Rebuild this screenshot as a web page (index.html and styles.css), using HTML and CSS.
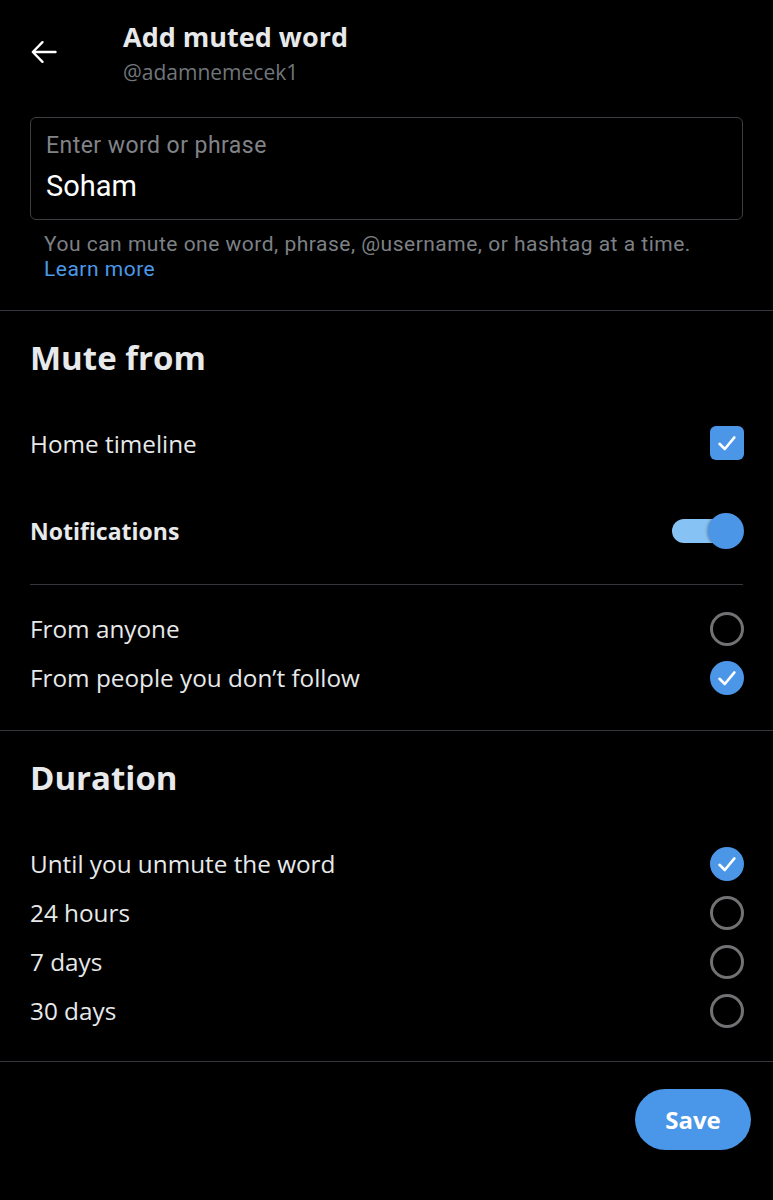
FILE: index.html
```html
<!DOCTYPE html>
<html>
	<head>
		<meta charset="utf-8">
		<link rel="stylesheet" href="styles.css">
	</head>
	<body>
		<div class="header">
			<div class="back">
				<svg width="26" height="26" viewBox="0 0 26 26">
					<path d="M24.5 13H2 M11.5 3.2L1.8 13l9.7 9.8" fill="none" stroke="#fff" stroke-width="2.4" stroke-linecap="round" stroke-linejoin="round"/>
				</svg>
			</div>
			<div class="title-block">
				<h1>Add muted word</h1>
				<div class="handle">@adamnemecek1</div>
			</div>
		</div>

		<div class="intro">
			<div class="field">
				<div class="field-label">Enter word or phrase</div>
				<div class="field-value">Soham</div>
			</div>
			<div class="hint">
				You can mute one word, phrase, @username, or hashtag at a time.<br>
				<a href="#" class="link">Learn more</a>
			</div>
		</div>

		<div class="section">
			<h2>Mute from</h2>
			<div class="switch-rows">
				<div class="row tall">
					<span>Home timeline</span>
					<span class="checkbox">
						<svg width="34" height="34" viewBox="0 0 34 34"><path d="M9.5 17.8l5.3 5.2 9.6-11.6" fill="none" stroke="#fff" stroke-width="2.6" stroke-linecap="round" stroke-linejoin="round"/></svg>
					</span>
				</div>
				<div class="row tall">
					<span class="bold">Notifications</span>
					<span class="toggle"><span class="knob"></span></span>
				</div>
			</div>
			<div class="sub-divider"></div>
			<div class="row">
				<span>From anyone</span>
				<span class="radio"></span>
			</div>
			<div class="row">
				<span>From people you don’t follow</span>
				<span class="radio checked">
					<svg width="34" height="34" viewBox="0 0 34 34"><path d="M9.5 17.8l5.3 5.2 9.6-11.6" fill="none" stroke="#fff" stroke-width="2.6" stroke-linecap="round" stroke-linejoin="round"/></svg>
				</span>
			</div>
		</div>

		<div class="section duration">
			<h2>Duration</h2>
			<div class="row">
				<span>Until you unmute the word</span>
				<span class="radio checked">
					<svg width="34" height="34" viewBox="0 0 34 34"><path d="M9.5 17.8l5.3 5.2 9.6-11.6" fill="none" stroke="#fff" stroke-width="2.6" stroke-linecap="round" stroke-linejoin="round"/></svg>
				</span>
			</div>
			<div class="row">
				<span>24 hours</span>
				<span class="radio"></span>
			</div>
			<div class="row">
				<span>7 days</span>
				<span class="radio"></span>
			</div>
			<div class="row">
				<span>30 days</span>
				<span class="radio"></span>
			</div>
		</div>

		<div class="footer">
			<button class="btn">Save</button>
		</div>
	</body>
</html>
```

FILE: styles.css
```css
body {
	margin: 0;
	background: #000;
	color: #e7e9ea;
	font-family: "Open Sans", "Liberation Sans", sans-serif;
	font-size: 24.3px;
}
.header {
	display: flex;
	align-items: flex-start;
	padding: 20px 0 0 31px;
}
.back {
	width: 92px;
	padding-top: 19px;
}
.back svg {
	display: block;
}
h1 {
	margin: 0;
	font-size: 27px;
	line-height: 34px;
	font-weight: 700;
}
.handle {
	margin-top: 4px;
	font-size: 21px;
	line-height: 28px;
	color: #71767b;
}
.intro {
	padding: 31px 30px 28px;
	border-bottom: 1px solid #34373b;
	font-family: Roboto, "Liberation Sans", sans-serif;
}
.field {
	border: 1px solid #3b3e42;
	border-radius: 6px;
	padding: 15px 15px 16px;
}
.field-label {
	font-size: 23px;
	line-height: 26px;
	letter-spacing: 0.45px;
	color: #808387;
}
.field-value {
	margin-top: 10px;
	font-size: 29px;
	line-height: 34px;
	color: #fff;
}
.hint {
	margin-top: 12px;
	padding-left: 14px;
	font-size: 21px;
	line-height: 25px;
	letter-spacing: 0.5px;
	color: #7d8085;
}
.link {
	color: #4b99e9;
	text-decoration: none;
}
.section {
	padding: 27px 30px 28px;
	border-bottom: 1px solid #34373b;
}
.section.duration {
	padding-bottom: 26px;
}
h2 {
	margin: 0;
	font-size: 33px;
	line-height: 40px;
	font-weight: 700;
}
.duration h2 {
	margin-bottom: 41px;
}
.switch-rows {
	display: flex;
	flex-direction: column;
	gap: 24px;
	margin-top: 33px;
}
.row {
	display: flex;
	justify-content: space-between;
	align-items: center;
	height: 49px;
}
.row.tall {
	height: 64px;
}
.bold {
	font-weight: 700;
	font-size: 23px;
}
.sub-divider {
	height: 1px;
	background: #34373b;
	margin: 21px 0 19px;
}
.checkbox {
	width: 34px;
	height: 34px;
	border-radius: 6px;
	background: #4b96e7;
	margin-right: -1px;
}
.checkbox svg, .radio svg {
	display: block;
}
.radio {
	box-sizing: border-box;
	width: 34px;
	height: 34px;
	border-radius: 50%;
	border: 3px solid #727275;
	margin-right: -1px;
}
.radio.checked {
	border: none;
	background: #4b96e7;
}
.toggle {
	display: flex;
	justify-content: flex-end;
	align-items: center;
	width: 68px;
	height: 24px;
	border-radius: 12px;
	background: #86c3f4;
	margin-right: 3px;
}
.knob {
	flex: none;
	width: 36px;
	height: 36px;
	border-radius: 50%;
	background: #4b96e7;
	margin-right: -4px;
	box-shadow: -1px 0 3px rgba(0, 0, 0, 0.3);
}
.footer {
	display: flex;
	justify-content: flex-end;
	padding: 27px 22px 0 0;
}
.btn {
	width: 116px;
	height: 61px;
	border: none;
	border-radius: 31px;
	background: #4a96e8;
	color: #fff;
	font-family: "Open Sans", "Liberation Sans", sans-serif;
	font-size: 24px;
	font-weight: 700;
	cursor: pointer;
}
```
